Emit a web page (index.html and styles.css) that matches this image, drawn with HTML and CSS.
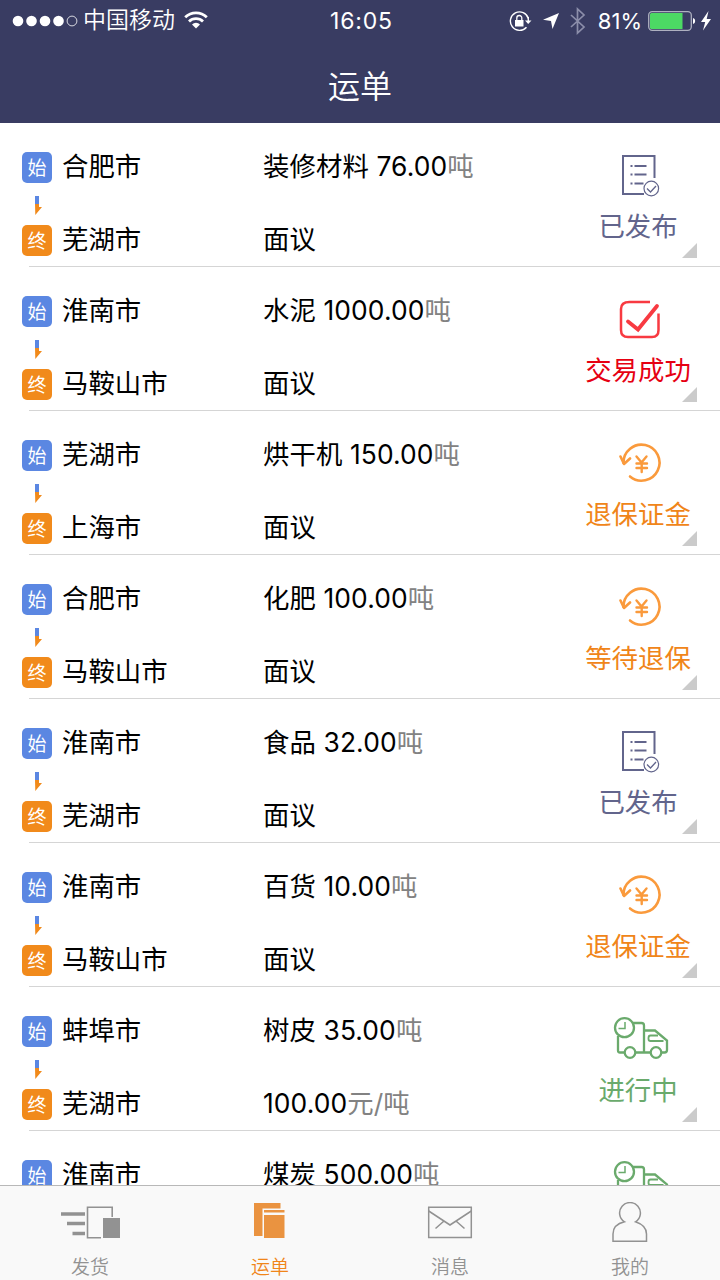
FILE: index.html
```html
<!DOCTYPE html>
<html lang="zh-CN">
<head>
    <meta charset="UTF-8">
    <meta name="viewport" content="width=device-width, initial-scale=1.0">
    <title>运单</title>
    <link rel="stylesheet" href="styles.css">
</head>
<body>
    <!-- icons -->
    <svg class="sprite" width="0" height="0">
        <symbol id="arrow" viewBox="0 0 10 20">
            <path d="M2 0h4v8H2z" fill="#5b87e2"/>
            <path d="M2 8h4v3h3L2.300 19z" fill="#f18a1b"/>
        </symbol>
        <symbol id="published" viewBox="0 0 60 48">
            <g fill="none" stroke="currentColor">
                <path d="M35.500 27V5H4v38h21" stroke-width="2"/>
                <path d="M11.500 15h2M15.500 15h12M11.500 23.500h2M15.500 23.500h12M11.500 32.500h2M15.500 32.500h9" stroke-width="2.200"/>
                <circle cx="32.300" cy="37.500" r="7.300" stroke-width="1.200"/>
                <path d="M28 37.500l3.500 3.500 5.500-6" stroke-width="1.300"/>
            </g>
        </symbol>
        <symbol id="success" viewBox="0 0 60 48">
            <g fill="none" stroke="currentColor">
                <path d="M31 7H10.500Q2 7 2 14v21q0 7 7 7h24q6.500 0 6.500-7V18.500" stroke-width="2.500"/>
                <path d="M9 26.500l10 8L38 11" stroke-width="3.800" stroke-linecap="round"/>
            </g>
        </symbol>
        <symbol id="refund" viewBox="0 0 60 48">
            <g fill="none" stroke="currentColor" stroke-width="2.600" stroke-linecap="round" stroke-linejoin="round">
                <path d="M4.500 24A18 18 0 1 1 11 37.500"/>
                <path d="M1.500 17.500l3.500 7.500 6-5.500"/>
                <path d="M17.500 17.500l5 6 5-6M17.500 24.500h10.500M17.500 29h10.500M22.700 24v9" stroke-width="2.400"/>
            </g>
        </symbol>
        <symbol id="truck" viewBox="0 0 60 48">
            <g fill="none" stroke="currentColor" stroke-width="2.300">
                <circle cx="11.500" cy="14.700" r="9.500"/>
                <path d="M12 9v6.500H5.500" stroke-width="1.500"/>
                <path d="M5 23v14.500q0 2 2 2h4M20 10h8.500q2.500 0 2.500 2.500v27H23M31 17.500h11L54 27.500V37q0 2.500-2.500 2.500H49M37 39.500h-6"/>
                <path d="M50.500 28H37.500q-2 0-2-2v-1q0-2.500 2-2.500h7.500" stroke-width="1.800"/>
                <circle cx="17" cy="39.500" r="5.300"/>
                <circle cx="43" cy="39.500" r="5.300"/>
            </g>
        </symbol>
    </svg>

    <header class="header">
        <div class="status-bar">
            <svg class="signal" width="66" height="12" viewBox="0 0 66 12">
                <g fill="#fff">
                    <circle cx="6" cy="6" r="5.300"/>
                    <circle cx="19.500" cy="6" r="5.300"/>
                    <circle cx="33" cy="6" r="5.300"/>
                    <circle cx="46.500" cy="6" r="5.300"/>
                </g>
                <circle cx="60" cy="6" r="4.900" fill="none" stroke="#fff" stroke-width=".8"/>
            </svg>
            <span class="carrier">中国移动</span>
            <svg class="wifi" width="24" height="20" viewBox="0 0 24 20">
                <g fill="none" stroke="#fff" stroke-width="2.800">
                    <path d="M1.200 6.200a15.500 15.500 0 0 1 21.600 0"/>
                    <path d="M5 10.500a10 10 0 0 1 14 0"/>
                </g>
                <path d="M8 13.500a5.500 5.500 0 0 1 8 0l-4 4z" fill="#fff"/>
            </svg>
            <span class="time">16:05</span>
            <div class="status-right">
                <svg width="24" height="22" viewBox="0 0 24 22">
                    <path d="M17.500 17.200A9.200 9.200 0 1 1 19.400 8.500" fill="none" stroke="#fff" stroke-width="1.400"/>
                    <path d="M19.300 7v4" stroke="#fff" stroke-width="1.400"/>
                    <path d="M16 10.500h6.500L19.200 14z" fill="#fff"/>
                    <path d="M6 10h8.500v6.500H6z" fill="#fff"/>
                    <path d="M7.800 10V8a2.500 2.500 0 0 1 5 0v2" fill="none" stroke="#fff" stroke-width="1.300"/>
                </svg>
                <svg class="location" width="18" height="18" viewBox="0 0 18 18">
                    <path d="M17 1L10.500 17 9 9 1 7.800z" fill="#fff"/>
                </svg>
                <svg class="bluetooth" width="16" height="28" viewBox="0 0 16 28">
                    <path d="M1 8l13 12-6.500 6V2L14 8 1 20" fill="none" stroke="#8c8eaa" stroke-width="1.700"/>
                </svg>
                <span class="percent">81%</span>
                <svg class="battery" width="48" height="20" viewBox="0 0 48 20">
                    <rect x=".7" y=".7" width="42.600" height="18.600" rx="3.500" fill="none" stroke="#aeb0c0" stroke-width="1.300"/>
                    <path d="M3.500 2H34.500v16H3.500Q2 18 2 16.500v-13Q2 2 3.500 2z" fill="#4cd964"/>
                    <path d="M45 7q2.200.5 2.200 3T45 13z" fill="#fff"/>
                </svg>
                <svg class="bolt" width="12" height="20" viewBox="0 0 12 20">
                    <path d="M8.500 0L1 11h4.200L3 19.500 11 8H6.700z" fill="#fff"/>
                </svg>
            </div>
        </div>
        <h1>运单</h1>
    </header>

    <main class="list">
        <div class="order">
            <div class="route">
                <span class="tag start">始</span><span>合肥市</span>
                <svg class="arrow"><use href="#arrow"/></svg>
                <span class="tag end">终</span><span>芜湖市</span>
            </div>
            <div class="cargo">
                <p>装修材料 76.00<i>吨</i></p>
                <p>面议</p>
            </div>
            <div class="state published">
                <svg><use href="#published"/></svg>
                <p>已发布</p>
            </div>
        </div>
        <div class="order">
            <div class="route">
                <span class="tag start">始</span><span>淮南市</span>
                <svg class="arrow"><use href="#arrow"/></svg>
                <span class="tag end">终</span><span>马鞍山市</span>
            </div>
            <div class="cargo">
                <p>水泥 1000.00<i>吨</i></p>
                <p>面议</p>
            </div>
            <div class="state success">
                <svg><use href="#success"/></svg>
                <p>交易成功</p>
            </div>
        </div>
        <div class="order">
            <div class="route">
                <span class="tag start">始</span><span>芜湖市</span>
                <svg class="arrow"><use href="#arrow"/></svg>
                <span class="tag end">终</span><span>上海市</span>
            </div>
            <div class="cargo">
                <p>烘干机 150.00<i>吨</i></p>
                <p>面议</p>
            </div>
            <div class="state refund">
                <svg><use href="#refund"/></svg>
                <p>退保证金</p>
            </div>
        </div>
        <div class="order">
            <div class="route">
                <span class="tag start">始</span><span>合肥市</span>
                <svg class="arrow"><use href="#arrow"/></svg>
                <span class="tag end">终</span><span>马鞍山市</span>
            </div>
            <div class="cargo">
                <p>化肥 100.00<i>吨</i></p>
                <p>面议</p>
            </div>
            <div class="state refund">
                <svg><use href="#refund"/></svg>
                <p>等待退保</p>
            </div>
        </div>
        <div class="order">
            <div class="route">
                <span class="tag start">始</span><span>淮南市</span>
                <svg class="arrow"><use href="#arrow"/></svg>
                <span class="tag end">终</span><span>芜湖市</span>
            </div>
            <div class="cargo">
                <p>食品 32.00<i>吨</i></p>
                <p>面议</p>
            </div>
            <div class="state published">
                <svg><use href="#published"/></svg>
                <p>已发布</p>
            </div>
        </div>
        <div class="order">
            <div class="route">
                <span class="tag start">始</span><span>淮南市</span>
                <svg class="arrow"><use href="#arrow"/></svg>
                <span class="tag end">终</span><span>马鞍山市</span>
            </div>
            <div class="cargo">
                <p>百货 10.00<i>吨</i></p>
                <p>面议</p>
            </div>
            <div class="state refund">
                <svg><use href="#refund"/></svg>
                <p>退保证金</p>
            </div>
        </div>
        <div class="order">
            <div class="route">
                <span class="tag start">始</span><span>蚌埠市</span>
                <svg class="arrow"><use href="#arrow"/></svg>
                <span class="tag end">终</span><span>芜湖市</span>
            </div>
            <div class="cargo">
                <p>树皮 35.00<i>吨</i></p>
                <p>100.00<i>元/吨</i></p>
            </div>
            <div class="state running">
                <svg><use href="#truck"/></svg>
                <p>进行中</p>
            </div>
        </div>
        <div class="order">
            <div class="route">
                <span class="tag start">始</span><span>淮南市</span>
            </div>
            <div class="cargo">
                <p>煤炭 500.00<i>吨</i></p>
            </div>
            <div class="state running">
                <svg><use href="#truck"/></svg>
            </div>
        </div>
    </main>

    <nav class="tabs">
        <a class="tab">
            <svg width="60" height="42" viewBox="0 0 60 42">
                <path d="M1 12h24M7 21.500h18M12.500 31.500H25" stroke="#929292" stroke-width="3.600"/>
                <path d="M52.200 15V5.200H27.500v30.500H41" fill="none" stroke="#929292" stroke-width="1.600"/>
                <path d="M43 16h17v20H43z" fill="#929292"/>
            </svg>
            <span>发货</span>
        </a>
        <a class="tab active">
            <svg width="60" height="42" viewBox="0 0 60 42">
                <path d="M14 1h26.500v5.500h-18V34H14z" fill="#ea9340"/>
                <path d="M24 8h20.500v2.600H24zM24 13h20.500v23H24z" fill="#ea9340"/>
            </svg>
            <span>运单</span>
        </a>
        <a class="tab">
            <svg width="60" height="42" viewBox="0 0 60 42">
                <g fill="none" stroke="#929292" stroke-width="1.500">
                    <path d="M8.700 5.200h42.600v30.300H8.700z"/>
                    <path d="M8.700 9L30 23 51.300 9M24 19l-8.500 7.500M36 19l8.500 7.500"/>
                </g>
            </svg>
            <span>消息</span>
        </a>
        <a class="tab">
            <svg width="60" height="42" viewBox="0 0 60 42">
                <path d="M24.500 19.800a10.400 10.400 0 1 1 11 0Q46.500 23.500 46.500 32v7.300H13V32q0-9.500 11.500-12.200z" fill="none" stroke="#929292" stroke-width="1.500"/>
            </svg>
            <span>我的</span>
        </a>
    </nav>
</body>
</html>
```
FILE: styles.css
```css
* {
    box-sizing: border-box;
}
body {
    margin: 0;
    height: 1280px;
    display: flex;
    flex-direction: column;
    overflow: hidden;
    background: #fff;
    color: #000;
    font-family: Inter, "Noto Sans CJK SC", sans-serif;
    font-size: 26.4px;
    font-weight: 400;
}
p, h1 {
    margin: 0;
}
.sprite {
    position: absolute;
}

/* header */
.header {
    flex: none;
    height: 123px;
    background: #393c62;
    color: #fff;
}
.status-bar {
    display: grid;
    grid-template-columns: 66px 93px 159px 94px 1fr;
    align-items: center;
    height: 40px;
    padding-left: 12px;
    padding-right: 8px;
}
.carrier {
    padding-left: 5px;
    font-size: 23px;
    font-weight: 350;
    line-height: 41px;
    white-space: nowrap;
}
.wifi {
    margin-left: 13px;
}
.time {
    font-size: 23px;
    letter-spacing: 0.8px;
}
.status-right {
    display: flex;
    align-items: center;
    justify-content: flex-end;
}
.location {
    margin-left: 9px;
}
.bluetooth {
    margin-left: 10px;
}
.percent {
    margin-left: 12px;
    font-size: 22px;
}
.battery {
    margin-left: 6px;
}
.bolt {
    margin-left: 4px;
}
h1 {
    font-size: 32px;
    font-weight: 350;
    line-height: 94px;
    text-align: center;
}

/* list */
.list {
    flex: 1;
    min-height: 0;
    overflow: hidden;
}
.order {
    position: relative;
    display: grid;
    grid-template-columns: 241px 1fr 120px;
    height: 144px;
    padding: 23px 22px 0;
    line-height: 40px;
}
.order::after {
    content: "";
    position: absolute;
    left: 29px;
    right: 0;
    bottom: 0;
    height: 1px;
    background: #d5d5d5;
}
.route {
    display: grid;
    grid-template-columns: 30px 1fr;
    grid-template-rows: 40px 33px 40px;
    column-gap: 10px;
    align-items: center;
}
.tag {
    height: 31px;
    margin-top: 2px;
    border-radius: 5px;
    color: #fff;
    font-size: 19px;
    line-height: 33px;
    text-align: center;
}
.start {
    background: #5b87e2;
}
.end {
    background: #f18a1b;
}
.arrow {
    grid-column: 1 / 3;
    width: 10px;
    height: 20px;
    margin-left: 11px;
    margin-top: 7px;
}
.cargo p {
    letter-spacing: 0.1px;
}
.cargo p + p {
    margin-top: 33px;
}
.cargo i {
    color: #828282;
    font-style: normal;
}
.state {
    position: relative;
    text-align: center;
    white-space: nowrap;
}
.state svg {
    display: block;
    width: 60px;
    height: 48px;
    margin: 5px 0 0 41px;
}
.state p {
    margin-top: 6px;
    line-height: 42px;
}
.state::after {
    content: "";
    position: absolute;
    right: 1px;
    top: 97px;
    border-left: 15px solid transparent;
    border-bottom: 15px solid #cbcbcb;
}
.published {
    color: #62658c;
}
.success {
    color: #e60012;
}
.success svg {
    color: #f83a41;
}
.refund {
    color: #f08519;
}
.refund svg {
    color: #fa9a3c;
}
.running {
    color: #6aaa6c;
}
.state.running svg {
    margin: 3px 0 0 35px;
}
.running p {
    margin-top: 8px;
}

/* bottom tabs */
.tabs {
    flex: none;
    display: grid;
    grid-template-columns: repeat(4, 1fr);
    height: 95px;
    border-top: 1px solid #b8b8b8;
    background: #f9f9f9;
}
.tab {
    display: flex;
    flex-direction: column;
    align-items: center;
    padding-top: 16px;
    color: #929292;
    font-size: 19px;
    font-weight: 350;
}
.tab span {
    margin-top: 9px;
    line-height: 30px;
}
.tab.active {
    color: #f08519;
}
```
